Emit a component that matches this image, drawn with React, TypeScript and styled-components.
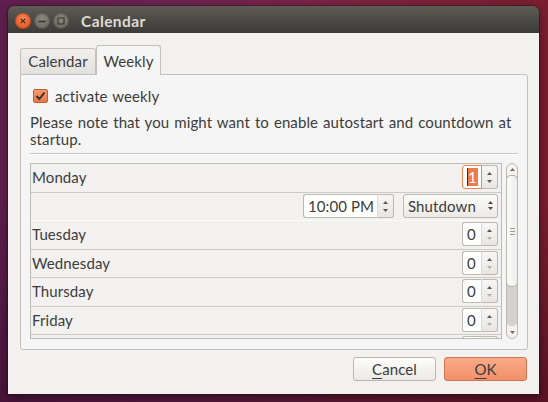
import React from "react";
import styled, { createGlobalStyle } from "styled-components";

const FONT = `"Lato", "Open Sans", "DejaVu Sans", sans-serif`;
const TEXT = "#3c3c3c";

const GlobalStyle = createGlobalStyle`
  html, body { margin: 0; padding: 0; }
  * { box-sizing: border-box; }
  body {
    width: 548px;
    height: 402px;
    overflow: hidden;
    font-family: ${FONT};
    background:
      linear-gradient(180deg, rgba(0,0,0,0) 50%, rgba(30,0,20,0.35) 100%),
      linear-gradient(90deg, #5f1f50 0%, #6c2350 30%, #7b2440 65%, #7a1e2e 100%);
  }
`;

const Desktop = styled.div`
  width: 548px;
  height: 402px;
  padding: 6px 0 0 8px;
`;

const Window = styled.div`
  width: 531px;
  height: 388px;
  display: flex;
  flex-direction: column;
  border-radius: 6px 6px 0 0;
  overflow: hidden;
  box-shadow: 0 0 0 1px rgba(30, 8, 20, 0.35), 0 3px 10px rgba(0, 0, 0, 0.45);
`;

const TitleBar = styled.div`
  flex: none;
  height: 27px;
  display: flex;
  align-items: center;
  padding: 2px 0 0 7px;
  background: linear-gradient(180deg, #5e5c56 0%, #4a4844 55%, #3c3b37 100%);
`;

const WinButtons = styled.div`
  display: flex;
  gap: 3px;
`;

const WinButton = styled.div<{ $close?: boolean }>`
  width: 16px;
  height: 16px;
  border-radius: 50%;
  display: flex;
  align-items: center;
  justify-content: center;
  background: ${(p) =>
    p.$close
      ? "radial-gradient(circle at 50% 35%, #f58556 0%, #e85a25 70%, #d04a18 100%)"
      : "radial-gradient(circle at 50% 35%, #8b8881 0%, #6e6b65 70%, #5d5b56 100%)"};
  box-shadow: inset 0 0 0 1px rgba(0, 0, 0, 0.22);
`;

const Title = styled.div`
  margin-left: 12px;
  color: #dfdbd2;
  font-weight: 700;
  font-size: 15.5px;
  letter-spacing: 0.4px;
  line-height: 18px;
`;

const Body = styled.div`
  flex: 1;
  min-height: 0;
  display: flex;
  flex-direction: column;
  background: #f2f1f0;
  padding: 12px 11px 13px 12px;
  color: ${TEXT};
  font-size: 15px;
  letter-spacing: 0.1px;
  word-spacing: 1px;
`;

const TabBar = styled.div`
  flex: none;
  height: 29px;
  display: flex;
  align-items: flex-start;
  position: relative;
  z-index: 1;
`;

const Tab = styled.div<{ $active?: boolean; $w: number }>`
  width: ${(p) => p.$w}px;
  height: ${(p) => (p.$active ? 30 : 26)}px;
  margin-top: ${(p) => (p.$active ? 0 : 3)}px;
  display: flex;
  align-items: flex-end;
  justify-content: center;
  padding-bottom: ${(p) => (p.$active ? 5 : 4)}px;
  line-height: 18px;
  border: 1px solid #c3c0bb;
  border-bottom: none;
  border-radius: 3px 3px 0 0;
  background: ${(p) =>
    p.$active ? "#f5f5f5" : "linear-gradient(180deg, #f0efed 0%, #e3e1de 100%)"};
  color: ${TEXT};
`;

const Panel = styled.div`
  flex: 1;
  min-height: 0;
  display: flex;
  flex-direction: column;
  background: #f5f5f5;
  border: 1px solid #c3c0bb;
  border-radius: 0 3px 3px 3px;
  padding: 12px 9px 10px 9px;
`;

const CheckRow = styled.label`
  height: 18px;
  display: flex;
  align-items: center;
  gap: 7px;
  padding-left: 3px;
  line-height: 18px;
`;

const CheckBox = styled.span`
  width: 15px;
  height: 14px;
  border-radius: 2px;
  border: 1px solid #c2602f;
  background: linear-gradient(180deg, #f49a70 0%, #e87a4a 100%);
  display: flex;
  align-items: center;
  justify-content: center;
`;

const Note = styled.p`
  margin: 9px 0 0;
  line-height: 17px;
`;

const Separator = styled.div`
  flex: none;
  height: 1px;
  margin-top: 5px;
  background: #cac7c2;
  box-shadow: 0 1px 0 #ffffff;
`;

const TableArea = styled.div`
  flex: 1;
  margin-top: 9px;
  display: flex;
  gap: 4px;
  min-height: 0;
`;

const Frame = styled.div`
  flex: 1;
  min-height: 0;
  border: 1px solid #bdb9b3;
  background: #f2f1f0;
  overflow: hidden;
`;

const Row = styled.div<{ $light?: boolean; $end?: boolean }>`
  height: 28.5px;
  display: flex;
  align-items: center;
  justify-content: ${(p) => (p.$end ? "flex-end" : "space-between")};
  gap: 9px;
  padding: 0 3px 1px 1px;
  border-bottom: 1px solid ${(p) => (p.$light ? "#fbfbfa" : "#cdcac5")};
`;

const DayLabel = styled.span`
  line-height: 18px;
`;

const Spin = styled.div<{ $w: number }>`
  width: ${(p) => p.$w}px;
  height: 24px;
  display: flex;
  flex: none;
`;

const SpinField = styled.div<{ $focus?: boolean }>`
  flex: 1;
  display: flex;
  align-items: center;
  padding-left: 4px;
  background: #ffffff;
  border: 1px solid ${(p) => (p.$focus ? "#e9834f" : "#bcb8b2")};
  border-right-color: ${(p) => (p.$focus ? "#e9834f" : "#dcd9d5")};
  border-radius: 3px 0 0 3px;
  line-height: 18px;
  color: ${TEXT};
  white-space: nowrap;
  word-spacing: 0;
`;

const Selection = styled.span`
  background: #ef7a4b;
  color: #ffffff;
  border-left: 1px solid #2f2f2f;
  line-height: 18px;
  padding: 0 1px 0 0;
`;

const SpinArrows = styled.div`
  width: 16px;
  display: flex;
  flex-direction: column;
  align-items: center;
  justify-content: space-between;
  padding: 6px 0 5px;
  border: 1px solid #bcb8b2;
  border-left: none;
  border-radius: 0 3px 3px 0;
  background: linear-gradient(180deg, #f7f6f5 0%, #e8e6e3 100%);
`;

const Combo = styled.div`
  width: 95px;
  height: 24px;
  flex: none;
  display: flex;
  align-items: center;
  justify-content: space-between;
  padding: 0 4px 0 4px;
  border: 1px solid #bcb8b2;
  border-radius: 3px;
  background: linear-gradient(180deg, #fbfbfa 0%, #eceae7 100%);
  line-height: 18px;
`;

const ComboArrows = styled.div`
  display: flex;
  flex-direction: column;
  gap: 3px;
`;

const Scrollbar = styled.div`
  width: 12px;
  flex: none;
  display: flex;
  flex-direction: column;
  border: 1px solid #bab6b0;
  border-radius: 6px;
  background: #f4f3f2;
  overflow: hidden;
`;

const Stepper = styled.div<{ $h: number }>`
  height: ${(p) => p.$h}px;
  flex: none;
  display: flex;
  align-items: center;
  justify-content: center;
`;

const Track = styled.div`
  flex: 1;
  background: #d4d1cc;
  border-radius: 4px;
`;

const Thumb = styled.div`
  height: 112px;
  margin: 0 -1px;
  border: 1px solid #b4b0aa;
  border-radius: 5px;
  background: linear-gradient(90deg, #fbfbfa 0%, #eeedeb 100%);
  display: flex;
  flex-direction: column;
  align-items: center;
  justify-content: center;
  gap: 2px;
`;

const GripLine = styled.div`
  width: 5px;
  height: 1px;
  background: #9c9892;
`;

const ButtonRow = styled.div`
  flex: none;
  display: flex;
  justify-content: flex-end;
  gap: 8px;
  margin-top: 7px;
  padding-right: 1px;
`;

const Button = styled.button<{ $primary?: boolean }>`
  width: 83px;
  height: 24px;
  padding: 0;
  font-family: ${FONT};
  font-size: 15px;
  letter-spacing: 0.1px;
  line-height: 18px;
  color: ${TEXT};
  border-radius: 3px;
  border: 1px solid ${(p) => (p.$primary ? "#d27450" : "#b9b5af")};
  background: ${(p) =>
    p.$primary
      ? "linear-gradient(180deg, #f8aa88 0%, #f2906a 100%)"
      : "linear-gradient(180deg, #fcfcfb 0%, #ebe9e6 100%)"};
  u {
    text-decoration-thickness: 1px;
    text-underline-offset: 3px;
  }
`;

const Tri = ({ up, color }: { up?: boolean; color: string }) => (
  <svg width="5" height="3" viewBox="0 0 5 3">
    <path d={up ? "M0 3 L2.5 0 L5 3 Z" : "M0 0 L2.5 3 L5 0 Z"} fill={color} />
  </svg>
);

const SpinBox = ({
  value,
  width,
  focus,
  downDisabled,
}: {
  value: string;
  width: number;
  focus?: boolean;
  downDisabled?: boolean;
}) => (
  <Spin $w={width}>
    <SpinField $focus={focus}>
      {focus ? <Selection>{value}</Selection> : value}
    </SpinField>
    <SpinArrows>
      <Tri up color="#5a5854" />
      <Tri color={downDisabled ? "#b5b1ab" : "#5a5854"} />
    </SpinArrows>
  </Spin>
);

const days: { name: string; value: string }[] = [
  { name: "Tuesday", value: "0" },
  { name: "Wednesday", value: "0" },
  { name: "Thursday", value: "0" },
  { name: "Friday", value: "0" },
  { name: "", value: "" },
];

export default function App() {
  return (
    <>
      <GlobalStyle />
      <Desktop>
        <Window>
          <TitleBar>
            <WinButtons>
              <WinButton $close>
                <svg width="16" height="16" viewBox="0 0 16 16">
                  <path d="M5.8 5.8 L10.2 10.2 M10.2 5.8 L5.8 10.2" stroke="#3a2a22" strokeWidth="1.1" />
                </svg>
              </WinButton>
              <WinButton>
                <svg width="16" height="16" viewBox="0 0 16 16">
                  <path d="M4.5 8.5 H11.5" stroke="#34332f" strokeWidth="1.3" />
                </svg>
              </WinButton>
              <WinButton>
                <svg width="16" height="16" viewBox="0 0 16 16">
                  <rect x="5" y="5" width="6" height="6" fill="none" stroke="#34332f" strokeWidth="1.1" />
                </svg>
              </WinButton>
            </WinButtons>
            <Title>Calendar</Title>
          </TitleBar>
          <Body>
            <TabBar>
              <Tab $w={76}>Calendar</Tab>
              <Tab $w={65} $active>
                Weekly
              </Tab>
            </TabBar>
            <Panel>
              <CheckRow>
                <CheckBox>
                  <svg width="11" height="10" viewBox="0 0 11 10">
                    <path d="M1.5 5 L4.3 8 L9.5 1.5" fill="none" stroke="#3d302a" strokeWidth="2" />
                  </svg>
                </CheckBox>
                activate weekly
              </CheckRow>
              <Note>
                Please note that you might want to enable autostart and countdown at startup.
              </Note>
              <Separator />
              <TableArea>
                <Frame>
                  <Row>
                    <DayLabel>Monday</DayLabel>
                    <SpinBox value="1" width={36} focus />
                  </Row>
                  <Row $end $light>
                    <SpinBox value="10:00 PM" width={91} />
                    <Combo>
                      <span>Shutdown</span>
                      <ComboArrows>
                        <Tri up color="#4a4844" />
                        <Tri color="#4a4844" />
                      </ComboArrows>
                    </Combo>
                  </Row>
                  {days.map((d, i) => (
                    <Row key={i}>
                      <DayLabel>{d.name}</DayLabel>
                      <SpinBox value={d.value} width={36} downDisabled />
                    </Row>
                  ))}
                </Frame>
                <Scrollbar>
                  <Stepper $h={11}>
                    <Tri up color="#6e6b66" />
                  </Stepper>
                  <Track>
                    <Thumb>
                      <GripLine />
                      <GripLine />
                      <GripLine />
                    </Thumb>
                  </Track>
                  <Stepper $h={12}>
                    <Tri color="#6e6b66" />
                  </Stepper>
                </Scrollbar>
              </TableArea>
            </Panel>
            <ButtonRow>
              <Button>
                <u>C</u>ancel
              </Button>
              <Button $primary>
                <u>O</u>K
              </Button>
            </ButtonRow>
          </Body>
        </Window>
      </Desktop>
    </>
  );
}
